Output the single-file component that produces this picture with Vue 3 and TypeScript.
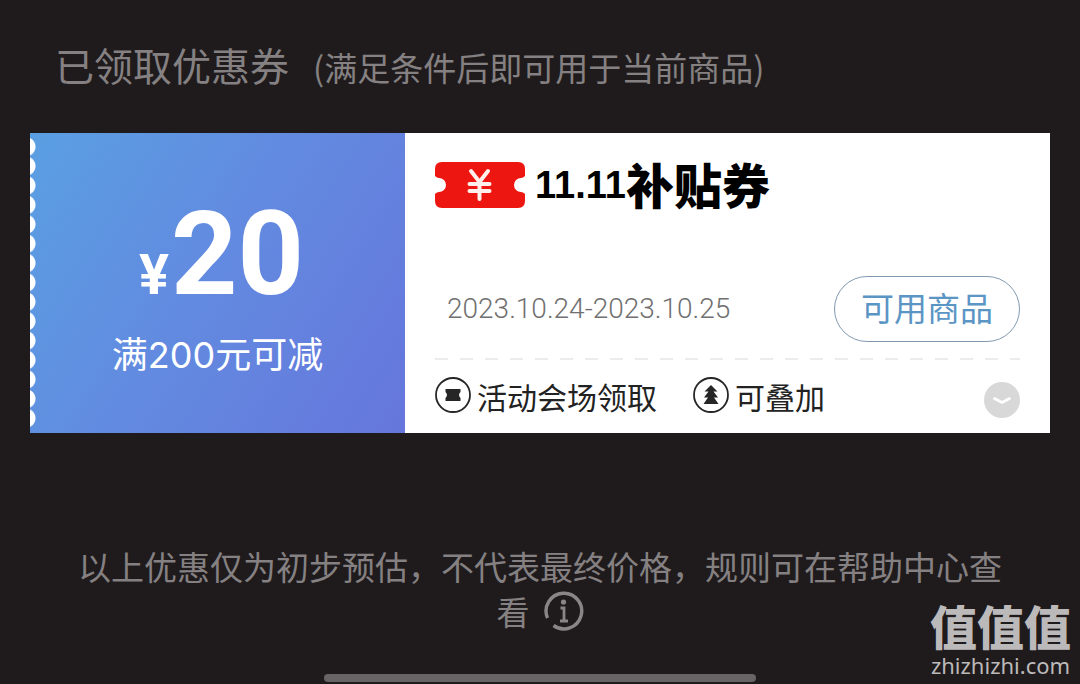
<script setup lang="ts">
import { ref } from 'vue'

interface Tag {
  icon: 'ticket' | 'stack'
  label: string
}

const coupon = {
  currency: '¥',
  amount: 20,
  condition: '满200元可减',
  period: '2023.10.24-2023.10.25',
}

const tags: Tag[] = [
  { icon: 'ticket', label: '活动会场领取' },
  { icon: 'stack', label: '可叠加' },
]

const expanded = ref(false)
</script>

<template>
  <main class="sheet">
    <header class="head">
      <h1>已领取优惠券</h1>
      <p>(满足条件后即可用于当前商品)</p>
    </header>

    <article class="coupon">
      <section class="value">
        <div class="price">
          <span class="currency">{{ coupon.currency }}</span>
          <span class="amount">{{ coupon.amount }}</span>
        </div>
        <p class="condition">{{ coupon.condition }}</p>
      </section>

      <section class="detail">
        <h2 class="brand">
          <svg class="brand-ticket" viewBox="0 0 90 46" aria-hidden="true">
            <path
              fill="#ee1610"
              d="M7 0H83Q90 0 90 7V14Q88 16 86 16A7 7 0 0 0 86 30Q88 30 90 32V39Q90 46 83 46H7Q0 46 0 39V32Q2 30 4 30A7 7 0 0 0 4 16Q2 16 0 14V7Q0 0 7 0Z"
            />
            <path
              fill="none"
              stroke="#fff0ec"
              stroke-width="4"
              stroke-linecap="round"
              d="M36 9L44.500 20L53 9M44.500 20V37M34.500 22H54.500M34.500 29H54.500"
            />
          </svg>
          <span class="brand-date">11.11</span>
          <span class="brand-name">补贴券</span>
        </h2>

        <div class="period-row">
          <time class="period">{{ coupon.period }}</time>
          <button type="button" class="goods">可用商品</button>
        </div>

        <div class="divider"></div>

        <div class="tag-row">
          <ul class="tags">
            <li v-for="tag in tags" :key="tag.label">
              <svg class="tag-icon" viewBox="0 0 36 36" aria-hidden="true">
                <path
                  v-if="tag.icon === 'ticket'"
                  fill="#262626"
                  d="M10.500 12H25.500V15Q22.500 18 25.500 21V24H10.500V21Q13.500 18 10.500 15Z"
                />
                <path
                  v-else
                  fill="#262626"
                  d="M18 8L24.500 14.500H20.500L25 20.500H21L25.500 27H10.500L15 20.500H11L15.500 14.500H11.500Z"
                />
                <circle cx="18" cy="18" r="17" fill="none" stroke="#262626" stroke-width="1.8" />
              </svg>
              <span>{{ tag.label }}</span>
            </li>
          </ul>
          <button
            type="button"
            class="more"
            aria-label="展开"
            :aria-expanded="expanded"
            @click="expanded = !expanded"
          >
            <svg viewBox="0 0 36 36" aria-hidden="true">
              <path
                d="M10.500 16.500L18 20.500L25.500 16.500"
                fill="none"
                stroke="#fff"
                stroke-width="2.600"
                stroke-linecap="round"
                stroke-linejoin="round"
              />
            </svg>
          </button>
        </div>
      </section>
    </article>

    <p class="note">
      以上优惠仅为初步预估，不代表最终价格，规则可在帮助中心查看<button
        type="button"
        class="info"
        aria-label="帮助"
      >
        <svg viewBox="0 0 40 40" aria-hidden="true">
          <path
            d="M3.500 27A17.800 17.800 0 1 1 9.500 34.500"
            fill="none"
            stroke="#8a8687"
            stroke-width="3.400"
          />
          <circle cx="19.500" cy="11" r="2.600" fill="#8a8687" />
          <path d="M16.500 17H20V29M16 30H24" fill="none" stroke="#8a8687" stroke-width="2.800" />
        </svg>
      </button>
    </p>

    <div class="watermark">
      <strong>值值值</strong>
      <span>zhizhizhi.com</span>
    </div>
    <div class="home-bar"></div>
  </main>
</template>

<style>
body {
  background: #1f1b1c;
}
</style>

<style scoped>
.sheet {
  position: relative;
  box-sizing: border-box;
  min-height: 100vh;
  padding: 35px 30px 0;
  overflow: hidden;
  background: #1f1b1c;
  color: #858182;
  font-family: 'Noto Sans CJK SC', sans-serif;
}

h1,
h2,
p,
ul {
  margin: 0;
  padding: 0;
}

button {
  margin: 0;
  padding: 0;
  border: 0;
  background: none;
  font-family: inherit;
  cursor: pointer;
}

.head {
  display: flex;
  align-items: baseline;
  gap: 24px;
  padding-left: 25px;
  height: 98px;
}

.head h1 {
  font-size: 39px;
  line-height: 58px;
  font-weight: 400;
}

.head p {
  font-size: 33px;
  line-height: 58px;
}

.coupon {
  display: grid;
  grid-template-columns: 375fr 645fr;
  min-height: 300px;
  background: #fff;
}

.value {
  position: relative;
  display: flex;
  flex-direction: column;
  align-items: center;
  padding-top: 61px;
  background: linear-gradient(122deg, #5a9fe2 0%, #628ae0 48%, #6676dc 100%);
  color: #fff;
}

.value::before {
  content: '';
  position: absolute;
  left: 0;
  top: 4px;
  bottom: 5px;
  width: 6px;
  background: radial-gradient(circle at -4px 50%, #fff 9px, transparent 10px) 0 0 / 6px 19px round;
}

.price {
  display: flex;
  align-items: baseline;
  gap: 2px;
  padding-left: 8px;
  font-family: Roboto, 'Liberation Sans', sans-serif;
  font-weight: 700;
  line-height: 120px;
}

.currency {
  font-size: 56px;
}

.amount {
  font-size: 116px;
}

.condition {
  margin-top: -6px;
  font-family: Inter, 'Noto Sans CJK SC', sans-serif;
  font-size: 36px;
  line-height: 52px;
}

.detail {
  display: flex;
  flex-direction: column;
  padding: 24px 30px 0;
}

.brand {
  display: flex;
  align-items: center;
  height: 56px;
  color: #000;
  font-weight: 900;
}

.brand-ticket {
  width: 90px;
  height: 46px;
  margin-right: 10px;
}

.brand-date {
  font-family: 'Liberation Sans', sans-serif;
  font-size: 38px;
  line-height: 56px;
}

.brand-name {
  font-size: 48px;
  line-height: 52px;
}

.brand span {
  height: 56px;
}

.period-row {
  display: flex;
  align-items: center;
  justify-content: space-between;
  margin-top: 63px;
  padding-left: 12px;
}

.period {
  font-family: Roboto, sans-serif;
  font-size: 28px;
  font-weight: 300;
  line-height: 40px;
  color: #707070;
}

.goods {
  box-sizing: border-box;
  width: 186px;
  height: 66px;
  padding-bottom: 4px;
  border: 1px solid #8199b0;
  border-radius: 33px;
  color: #5b95c4;
  font-size: 33px;
  line-height: 60px;
}

.divider {
  height: 2px;
  margin-top: 16px;
  background: repeating-linear-gradient(90deg, #ececec 0 13px, transparent 13px 25px);
}

.tag-row {
  display: flex;
  align-items: flex-start;
  justify-content: space-between;
  padding-top: 17px;
}

.tags {
  display: flex;
  gap: 36px;
  list-style: none;
}

.tags li {
  display: flex;
  align-items: flex-start;
  gap: 6px;
  color: #222;
  font-size: 30px;
  line-height: 38px;
}

.tag-icon {
  width: 36px;
  height: 36px;
}

.more {
  width: 36px;
  height: 36px;
  margin-top: 5px;
  border-radius: 50%;
  background: #d8d8d8;
}

.more svg {
  display: block;
}

.note {
  margin-top: 111px;
  padding: 0 46px;
  font-size: 33px;
  line-height: 45px;
  text-align: center;
}

.info {
  width: 40px;
  height: 40px;
  margin-left: 14px;
  vertical-align: -6px;
}

.info svg {
  display: block;
}

.watermark {
  position: absolute;
  right: 9px;
  bottom: 4px;
  display: flex;
  flex-direction: column;
  align-items: center;
  color: #bcb9ba;
}

.watermark strong {
  font-size: 47px;
  line-height: 50px;
  font-weight: 900;
}

.watermark span {
  font-family: 'Noto Sans', sans-serif;
  font-size: 22px;
  line-height: 30px;
}

.home-bar {
  position: absolute;
  left: 30%;
  right: 30%;
  bottom: 2px;
  height: 8px;
  border-radius: 4px;
  background: #686465;
}
</style>
